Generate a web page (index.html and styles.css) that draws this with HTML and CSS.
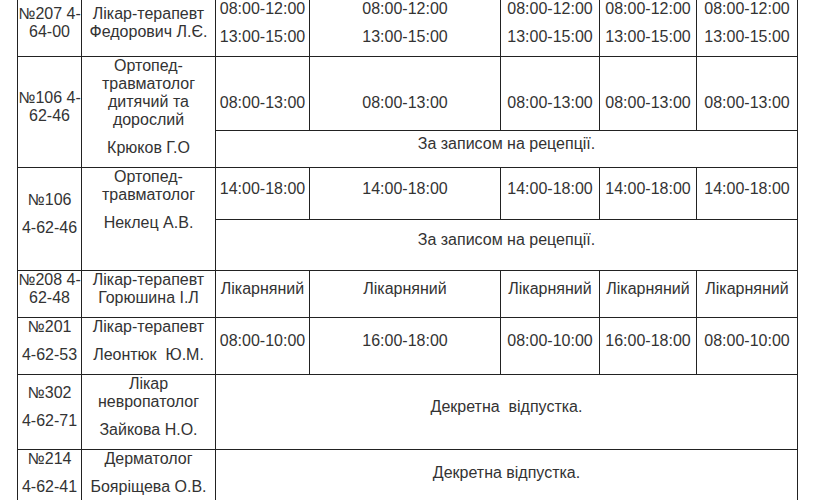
FILE: index.html
```html
<!DOCTYPE html>
<html lang="uk">
<head>
<meta charset="utf-8">
<title>Графік прийому лікарів</title>
<link rel="stylesheet" href="styles.css">
</head>
<body>
<div class="page">
<table class="schedule">
<colgroup>
<col class="c-room"><col class="c-doc"><col class="c-d1"><col class="c-d2"><col class="c-d3"><col class="c-d4"><col class="c-d5">
</colgroup>
<tbody>
<tr class="r1">
<td><p>№207 4-64-00</p></td>
<td><p>Лікар-терапевт Федорович Л.Є.</p></td>
<td><p>08:00-12:00</p><p>13:00-15:00</p></td>
<td><p>08:00-12:00</p><p>13:00-15:00</p></td>
<td><p>08:00-12:00</p><p>13:00-15:00</p></td>
<td><p>08:00-12:00</p><p>13:00-15:00</p></td>
<td><p>08:00-12:00</p><p>13:00-15:00</p></td>
</tr>
<tr class="r2a">
<td rowspan="2"><p>№106 4-62-46</p></td>
<td rowspan="2"><p>Ортопед-травматолог дитячий та дорослий</p><p>Крюков Г.О</p></td>
<td class="lowered"><p>08:00-13:00</p></td>
<td class="lowered"><p>08:00-13:00</p></td>
<td class="lowered"><p>08:00-13:00</p></td>
<td class="lowered"><p>08:00-13:00</p></td>
<td class="lowered"><p>08:00-13:00</p></td>
</tr>
<tr class="r2b">
<td colspan="5"><p>За записом на рецепції.</p></td>
</tr>
<tr class="r3a">
<td rowspan="2"><p>№106</p><p>4-62-46</p></td>
<td rowspan="2" class="top"><p>Ортопед-травматолог</p><p>Неклец А.В.</p></td>
<td><p>14:00-18:00</p></td>
<td><p>14:00-18:00</p></td>
<td><p>14:00-18:00</p></td>
<td><p>14:00-18:00</p></td>
<td><p>14:00-18:00</p></td>
</tr>
<tr class="r3b">
<td colspan="5"><p>За записом на рецепції.</p></td>
</tr>
<tr class="r4">
<td><p>№208 4-62-48</p></td>
<td><p>Лікар-терапевт Горюшина І.Л</p></td>
<td><p>Лікарняний</p></td>
<td><p>Лікарняний</p></td>
<td><p>Лікарняний</p></td>
<td><p>Лікарняний</p></td>
<td><p>Лікарняний</p></td>
</tr>
<tr class="r5">
<td><p>№201</p><p>4-62-53</p></td>
<td><p>Лікар-терапевт</p><p>Леонтюк &nbsp;Ю.М.</p></td>
<td><p>08:00-10:00</p></td>
<td><p>16:00-18:00</p></td>
<td><p>08:00-10:00</p></td>
<td><p>16:00-18:00</p></td>
<td><p>08:00-10:00</p></td>
</tr>
<tr class="r6">
<td><p>№302</p><p>4-62-71</p></td>
<td><p>Лікар невропатолог</p><p>Зайкова Н.О.</p></td>
<td colspan="5"><p>Декретна &nbsp;відпустка.</p></td>
</tr>
<tr class="r7">
<td><p>№214</p><p>4-62-41</p></td>
<td><p>Дерматолог</p><p>Бояріщева О.В.</p></td>
<td colspan="5"><p>Декретна відпустка.</p></td>
</tr>
</tbody>
</table>
</div>
</body>
</html>
```

FILE: styles.css
```css
html, body {
  margin: 0;
  padding: 0;
  background: #ffffff;
}

.page {
  padding-left: 17px;
  overflow: hidden;
  height: 500px;
}

.schedule {
  margin-top: -1px;
  border-collapse: collapse;
  table-layout: fixed;
  width: 781px;
  font-family: "Liberation Sans", Arial, sans-serif;
  font-size: 16px;
  line-height: 18px;
  color: #333333;
}

.c-room { width: 64px; }
.c-doc { width: 134px; }
.c-d1 { width: 94px; }
.c-d2 { width: 191px; }
.c-d3 { width: 99px; }
.c-d4 { width: 97px; }
.c-d5 { width: 101px; }

.schedule td {
  border: 1px solid #222222;
  padding: 0;
  text-align: center;
  vertical-align: middle;
}

.schedule p {
  margin: 0 0 10px;
}

.schedule td.top {
  vertical-align: top;
}

.schedule td.lowered {
  padding-top: 28px;
}

.r1 { height: 57px; }
.r2a { height: 74px; }
.r2b { height: 37px; }
.r3a { height: 52px; }
.r3b { height: 51px; }
.r4 { height: 47px; }
.r5 { height: 57px; }
.r6 { height: 75px; }
.r7 { height: 57px; }
```
